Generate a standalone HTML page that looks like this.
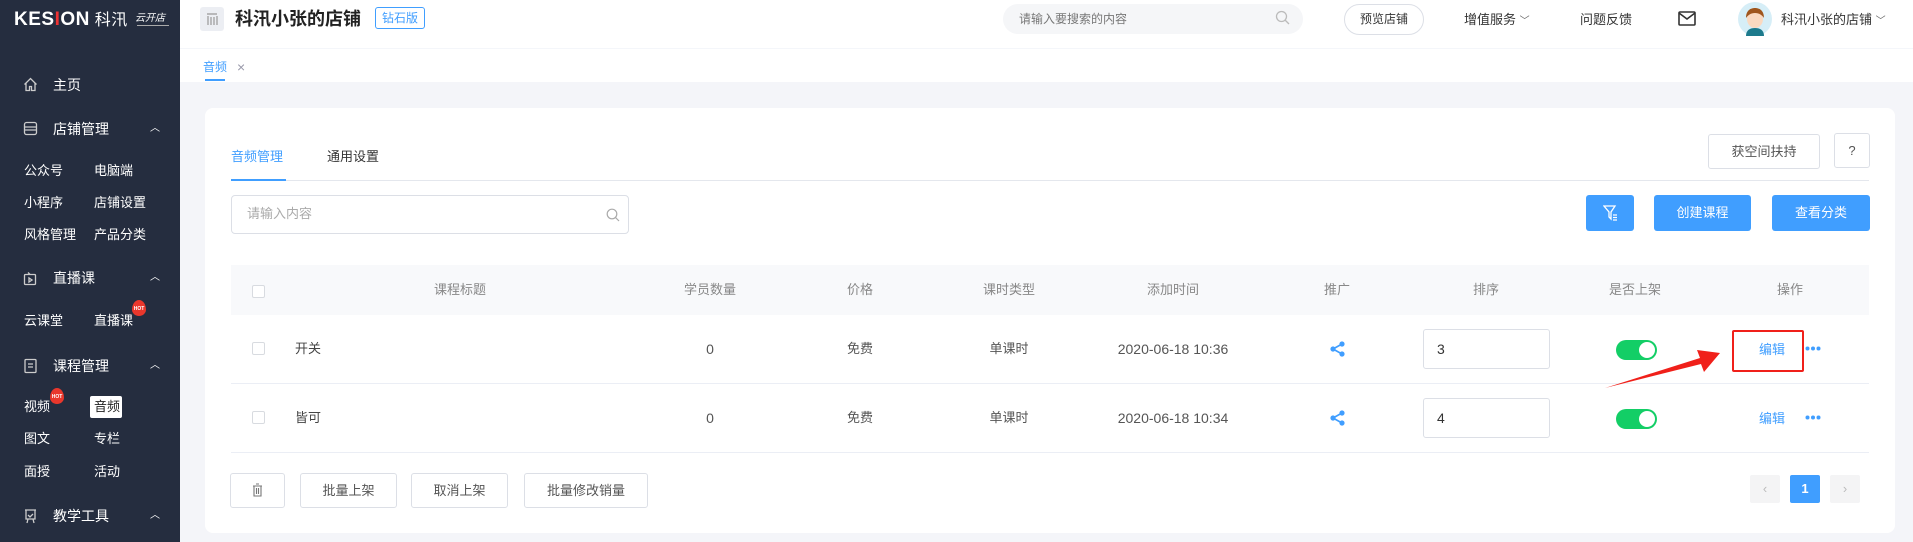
<!DOCTYPE html>
<html><head><meta charset="utf-8">
<style>
*{margin:0;padding:0;box-sizing:border-box}
body{width:1913px;height:542px;overflow:hidden;background:#f4f5f9;font-family:"Liberation Sans","Noto Sans CJK SC",sans-serif;position:relative;color:#333;line-height:20px}
.a{position:absolute;white-space:nowrap}
.sb{left:0;top:0;width:180px;height:542px;background:#252d3f}
.sb .a{color:#fff}
.m{font-size:14px;left:53px}
.s{font-size:13px}
.chev{font-size:10px;left:150px}
.hot{width:14px;height:16px;background:#e9372c;border-radius:50% 50% 50% 50%/60% 60% 40% 40%;color:#fff!important;font-size:5px;text-align:center;line-height:18px;font-weight:bold}
.btn{border:1px solid #dcdfe6;border-radius:3px;background:#fff;font-size:13px;color:#555;text-align:center}
.bb{background:#409eff;border-radius:3px;color:#fff;font-size:13px;text-align:center}
.th{font-size:13px;color:#888;top:280px;transform:translateX(-50%)}
.td{font-size:13px;color:#555;transform:translateX(-50%)}
.cb{width:13px;height:13px;border:1px solid #d8dbe0;border-radius:2px;background:#fff}
.tg{width:41px;height:20px;border-radius:10px;background:#13ce66}
.tg:after{content:"";position:absolute;right:2px;top:2px;width:16px;height:16px;border-radius:50%;background:#fff}
.inp{width:127px;height:40px;border:1px solid #dcdfe6;border-radius:3px;background:#fff;font-size:14px;color:#333;padding:9px 0 0 13px}
</style></head><body>
<div class="a sb">
 <div class="a" style="left:14px;top:10px;font-size:19px;font-weight:bold;letter-spacing:0.5px">KES<span style="color:#e33">I</span>ON<span style="font-size:16px;font-weight:normal"> 科汛</span></div>
 <div class="a" style="left:135px;top:9px;font-size:10px;font-style:italic">云开店</div>
 <div class="a" style="left:137px;top:25px;width:32px;height:1px;background:#aaa"></div>
 <svg class="a" style="left:23px;top:77px" width="15" height="15" viewBox="0 0 15 15" fill="none" stroke="#ccc" stroke-width="1.3"><path d="M1.5 7.5L7.5 1.5 13.5 7.5M3 6v7.5h3.5v-4h2v4H12V6"/></svg>
 <div class="a m" style="top:75px">主页</div>
 <svg class="a" style="left:23px;top:121px" width="15" height="15" viewBox="0 0 15 15" fill="none" stroke="#ccc" stroke-width="1.3"><rect x="1.5" y="1.5" width="12" height="12" rx="2"/><path d="M1.5 6h12M1.5 9h12"/></svg>
 <div class="a m" style="top:119px">店铺管理</div><div class="a chev" style="top:119px">︿</div>
 <div class="a s" style="left:24px;top:161px">公众号</div><div class="a s" style="left:94px;top:161px">电脑端</div>
 <div class="a s" style="left:24px;top:193px">小程序</div><div class="a s" style="left:94px;top:193px">店铺设置</div>
 <div class="a s" style="left:24px;top:225px">风格管理</div><div class="a s" style="left:94px;top:225px">产品分类</div>
 <svg class="a" style="left:23px;top:271px" width="15" height="15" viewBox="0 0 15 15" fill="none" stroke="#ccc" stroke-width="1.3"><rect x="1.5" y="3.5" width="11" height="10" rx="1"/><path d="M6 7v4l3-2zM5 1.5l2 2"/></svg>
 <div class="a m" style="top:268px">直播课</div><div class="a chev" style="top:268px">︿</div>
 <div class="a s" style="left:24px;top:311px">云课堂</div><div class="a s" style="left:94px;top:311px">直播课</div>
 <div class="a hot" style="left:132px;top:300px">HOT</div>
 <svg class="a" style="left:23px;top:358px" width="15" height="16" viewBox="0 0 15 16" fill="none" stroke="#ccc" stroke-width="1.3"><rect x="2" y="1.5" width="11" height="13" rx="1"/><path d="M5 6h5M5 9h5"/></svg>
 <div class="a m" style="top:356px">课程管理</div><div class="a chev" style="top:356px">︿</div>
 <div class="a s" style="left:24px;top:397px">视频</div>
 <div class="a hot" style="left:50px;top:388px">HOT</div>
 <div class="a" style="left:90px;top:396px;width:32px;height:22px;background:#fff;border-radius:2px"></div>
 <div class="a s" style="left:94px;top:397px;color:#222!important">音频</div>
 <div class="a s" style="left:24px;top:429px">图文</div><div class="a s" style="left:94px;top:429px">专栏</div>
 <div class="a s" style="left:24px;top:462px">面授</div><div class="a s" style="left:94px;top:462px">活动</div>
 <svg class="a" style="left:23px;top:508px" width="15" height="16" viewBox="0 0 15 16" fill="none" stroke="#ccc" stroke-width="1.3"><path d="M2 2h11M3 2v9h9V2M5 7l2 2 3-3M5 11l-1 4M10 11l1 4"/></svg>
 <div class="a m" style="top:506px">教学工具</div><div class="a chev" style="top:506px">︿</div>
</div>
<!-- header -->
<div class="a" style="left:180px;top:0;width:1733px;height:48px;background:#fff"></div>
<div class="a" style="left:200px;top:7px;width:24px;height:24px;background:#eceef3;border-radius:3px"></div>
<svg class="a" style="left:206px;top:13px" width="12" height="12" viewBox="0 0 12 12" stroke="#999" stroke-width="1.2"><path d="M1 1h10M2 3v9M5 4v8M8 4v8M11 3v9"/></svg>
<div class="a" style="left:235px;top:7px;font-size:18px;font-weight:bold;color:#222;line-height:24px">科汛小张的店铺</div>
<div class="a" style="left:375px;top:7px;width:50px;height:22px;border:1px solid #409eff;border-radius:3px;color:#409eff;font-size:12px;text-align:center;line-height:20px">钻石版</div>
<div class="a" style="left:1003px;top:4px;width:300px;height:30px;background:#f5f6f8;border-radius:15px"></div>
<div class="a" style="left:1019px;top:9px;font-size:12px;color:#777">请输入要搜索的内容</div>
<svg class="a" style="left:1275px;top:10px" width="15" height="15" viewBox="0 0 15 15" fill="none" stroke="#bbb" stroke-width="1.3"><circle cx="6.5" cy="6.5" r="5"/><path d="M10 10l4 4"/></svg>
<div class="a" style="left:1344px;top:4px;width:80px;height:31px;border:1px solid #dcdfe6;border-radius:16px;font-size:12px;color:#333;text-align:center;line-height:29px">预览店铺</div>
<div class="a" style="left:1464px;top:10px;font-size:13px;color:#333">增值服务 <span style="font-size:10px;color:#666">﹀</span></div>
<div class="a" style="left:1580px;top:10px;font-size:13px;color:#333">问题反馈</div>
<svg class="a" style="left:1678px;top:11px" width="18" height="15" viewBox="0 0 18 15" fill="none" stroke="#333" stroke-width="1.6"><rect x="1" y="1" width="16" height="13" rx="1"/><path d="M1 2l8 6 8-6"/></svg>
<svg class="a" style="left:1738px;top:2px" width="34" height="34" viewBox="0 0 34 34"><circle cx="17" cy="17" r="17" fill="#d6eef7"/><path d="M8 34c0-6 4-8 9-8s9 2 9 8z" fill="#1d7a8c"/><ellipse cx="17" cy="17" rx="8" ry="9" fill="#fbd9c0"/><path d="M8 16c0-8 5-10 9-10s9 2 9 10c-2-3-5-5-9-5s-7 2-9 5z" fill="#a0561d"/></svg>
<div class="a" style="left:1781px;top:10px;font-size:13px;color:#333">科汛小张的店铺 <span style="font-size:10px;color:#666">﹀</span></div>
<!-- tab bar -->
<div class="a" style="left:180px;top:48px;width:1733px;height:34px;background:#fff;border-top:1px solid #f4f6fa"></div>
<div class="a" style="left:203px;top:57px;font-size:12px;color:#409eff">音频</div>
<div class="a" style="left:237px;top:57px;font-size:14px;color:#99a">×</div>
<div class="a" style="left:205px;top:79px;width:20px;height:2px;background:#409eff"></div>
<!-- card -->
<div class="a" style="left:205px;top:108px;width:1690px;height:425px;background:#fff;border-radius:8px"></div>
<div class="a" style="left:231px;top:147px;font-size:13px;color:#409eff">音频管理</div>
<div class="a" style="left:327px;top:147px;font-size:13px;color:#333">通用设置</div>
<div class="a" style="left:231px;top:180px;width:1638px;height:1px;background:#e4e7ed"></div>
<div class="a" style="left:231px;top:179px;width:55px;height:2px;background:#409eff"></div>
<div class="a btn" style="left:1708px;top:134px;width:112px;height:35px;line-height:33px">获空间扶持</div>
<div class="a btn" style="left:1834px;top:133px;width:36px;height:35px;line-height:33px">?</div>
<div class="a" style="left:231px;top:195px;width:398px;height:39px;border:1px solid #dcdfe6;border-radius:4px"></div>
<div class="a" style="left:247px;top:204px;font-size:13px;color:#aaa">请输入内容</div>
<svg class="a" style="left:606px;top:208px" width="14" height="14" viewBox="0 0 14 14" fill="none" stroke="#aaa" stroke-width="1.2"><circle cx="6" cy="6" r="4.8"/><path d="M9.5 9.5l3.5 3.5"/></svg>
<div class="a bb" style="left:1586px;top:195px;width:48px;height:36px"></div>
<svg class="a" style="left:1603px;top:205px" width="15" height="16" viewBox="0 0 15 16" fill="none" stroke="#fff" stroke-width="1.3"><path d="M1 1h11L8 7v7l-2-2V7z"/><path d="M10 10h4M10 12.5h4M10 15h4"/></svg>
<div class="a bb" style="left:1654px;top:195px;width:97px;height:36px;line-height:36px">创建课程</div>
<div class="a bb" style="left:1772px;top:195px;width:98px;height:36px;line-height:36px">查看分类</div>
<!-- table -->
<div class="a" style="left:231px;top:265px;width:1638px;height:50px;background:#f8f9fb"></div>
<div class="a cb" style="left:252px;top:285px"></div>
<div class="a th" style="left:460px">课程标题</div>
<div class="a th" style="left:710px">学员数量</div>
<div class="a th" style="left:860px">价格</div>
<div class="a th" style="left:1009px">课时类型</div>
<div class="a th" style="left:1173px">添加时间</div>
<div class="a th" style="left:1337px">推广</div>
<div class="a th" style="left:1486px">排序</div>
<div class="a th" style="left:1635px">是否上架</div>
<div class="a th" style="left:1790px">操作</div>
<div class="a" style="left:231px;top:383px;width:1638px;height:1px;background:#ebeef5"></div>
<div class="a" style="left:231px;top:452px;width:1638px;height:1px;background:#ebeef5"></div>
<!-- row1 -->
<div class="a cb" style="left:252px;top:342px"></div>
<div class="a" style="left:295px;top:339px;font-size:13px;color:#444">开关</div>
<div class="a td" style="left:710px;top:339px;font-size:14px">0</div>
<div class="a td" style="left:860px;top:339px">免费</div>
<div class="a td" style="left:1009px;top:339px">单课时</div>
<div class="a td" style="left:1173px;top:339px;font-size:14px">2020-06-18 10:36</div>
<svg class="a" style="left:1330px;top:341px" width="15" height="16" viewBox="0 0 15 16"><g fill="#409eff"><circle cx="3" cy="8" r="2.6"/><circle cx="12" cy="3" r="2.6"/><circle cx="12" cy="13" r="2.6"/></g><path d="M3 8L12 3M3 8l9 5" stroke="#409eff" stroke-width="1.6"/></svg>
<div class="a inp" style="left:1423px;top:329px">3</div>
<div class="a tg" style="left:1616px;top:340px"></div>
<div class="a" style="left:1732px;top:330px;width:72px;height:42px;border:2px solid #f0201a;border-radius:2px"></div>
<div class="a" style="left:1759px;top:340px;font-size:13px;color:#409eff">编辑</div>
<svg class="a" style="left:1805px;top:346px" width="16" height="5" viewBox="0 0 16 5" fill="#409eff"><circle cx="2.5" cy="2.5" r="2"/><circle cx="8" cy="2.5" r="2"/><circle cx="13.5" cy="2.5" r="2"/></svg>
<!-- row2 -->
<div class="a cb" style="left:252px;top:411px"></div>
<div class="a" style="left:295px;top:408px;font-size:13px;color:#444">皆可</div>
<div class="a td" style="left:710px;top:408px;font-size:14px">0</div>
<div class="a td" style="left:860px;top:408px">免费</div>
<div class="a td" style="left:1009px;top:408px">单课时</div>
<div class="a td" style="left:1173px;top:408px;font-size:14px">2020-06-18 10:34</div>
<svg class="a" style="left:1330px;top:410px" width="15" height="16" viewBox="0 0 15 16"><g fill="#409eff"><circle cx="3" cy="8" r="2.6"/><circle cx="12" cy="3" r="2.6"/><circle cx="12" cy="13" r="2.6"/></g><path d="M3 8L12 3M3 8l9 5" stroke="#409eff" stroke-width="1.6"/></svg>
<div class="a inp" style="left:1423px;top:398px">4</div>
<div class="a tg" style="left:1616px;top:409px"></div>
<div class="a" style="left:1759px;top:409px;font-size:13px;color:#409eff">编辑</div>
<svg class="a" style="left:1805px;top:415px" width="16" height="5" viewBox="0 0 16 5" fill="#409eff"><circle cx="2.5" cy="2.5" r="2"/><circle cx="8" cy="2.5" r="2"/><circle cx="13.5" cy="2.5" r="2"/></svg>
<!-- arrow -->
<svg class="a" style="left:1600px;top:330px" width="130" height="65" viewBox="0 0 130 65"><path d="M5 58L100 28 97 20 120 23 104 42 101 34z" fill="#f0201a"/></svg>
<!-- bottom -->
<div class="a btn" style="left:230px;top:473px;width:55px;height:35px"></div>
<svg class="a" style="left:252px;top:483px" width="11" height="14" viewBox="0 0 11 14" fill="none" stroke="#777" stroke-width="1.1"><path d="M1 3h9M4 1h3M2 3v10h7V3M4.5 5v6M6.5 5v6"/></svg>
<div class="a btn" style="left:300px;top:473px;width:97px;height:35px;line-height:33px">批量上架</div>
<div class="a btn" style="left:411px;top:473px;width:97px;height:35px;line-height:33px">取消上架</div>
<div class="a btn" style="left:524px;top:473px;width:124px;height:35px;line-height:33px">批量修改销量</div>
<div class="a" style="left:1750px;top:475px;width:30px;height:28px;background:#f4f4f5;border-radius:2px;color:#bbb;font-size:13px;text-align:center;line-height:28px">‹</div>
<div class="a" style="left:1790px;top:475px;width:30px;height:28px;background:#409eff;border-radius:2px;color:#fff;font-size:13px;font-weight:bold;text-align:center;line-height:28px">1</div>
<div class="a" style="left:1830px;top:475px;width:30px;height:28px;background:#f4f4f5;border-radius:2px;color:#bbb;font-size:13px;text-align:center;line-height:28px">›</div>
</body></html>
